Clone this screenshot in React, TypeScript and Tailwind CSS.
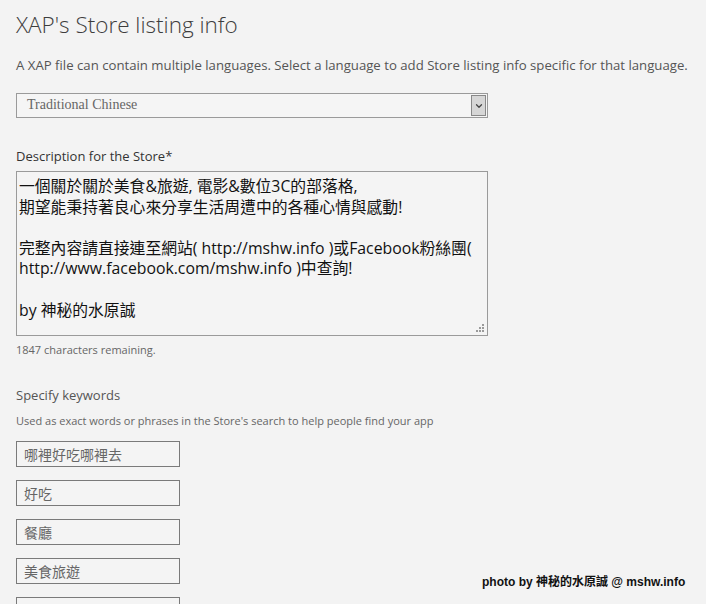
import { ChevronDown } from 'lucide-react';

const sans = { fontFamily: '"Open Sans", "Noto Sans CJK TC", sans-serif' };

const keywords = ['哪裡好吃哪裡去', '好吃', '餐廳', '美食旅遊', '台灣'];

export default function App() {
  return (
    <div className="relative h-[604px] w-[706px] overflow-hidden bg-[#f3f3f3] text-[#444]" style={sans}>
      <div className="px-4 pt-[9px]">
        {/* Heading */}
        <h1 className="text-[22.5px] font-light leading-[32px] text-[#3d3d3d]">XAP's Store listing info</h1>
        <p className="mt-[15px] text-[13.2px] leading-[18px] text-[#555]">
          A XAP file can contain multiple languages. Select a language to add Store listing info specific for that language.
        </p>

        {/* Language select */}
        <div className="mt-[19px] flex h-[25px] w-[472px] items-stretch border border-[#9a9a9a] bg-[#f5f5f5]">
          <div
            className="flex-1 pl-[10px] text-[14px] leading-[22px] text-[#666]"
            style={{ fontFamily: '"Liberation Serif", serif' }}
          >
            Traditional Chinese
          </div>
          <div className="m-px flex w-[15px] items-center justify-center border border-[#888] bg-[#d6d6d6]">
            <ChevronDown className="h-[10px] w-[10px] text-[#444]" strokeWidth={3} />
          </div>
        </div>

        {/* Description */}
        <div className="mt-[29px] text-[13px] leading-[18px] text-[#333]">Description for the Store*</div>
        <div className="relative mt-[6px] h-[165px] w-[472px] border border-[#9a9a9a] bg-[#f4f4f4] px-[2px] pt-[4px] text-[15.8px] leading-[20.6px] text-[#111]">
          <div>一個關於關於美食&amp;旅遊, 電影&amp;數位3C的部落格,</div>
          <div>期望能秉持著良心來分享生活周遭中的各種心情與感動!</div>
          <div>&nbsp;</div>
          <div>完整內容請直接連至網站( http://mshw.info )或Facebook粉絲團(</div>
          <div>http://www.facebook.com/mshw.info )中查詢!</div>
          <div>&nbsp;</div>
          <div>by 神秘的水原誠</div>
          <svg className="absolute bottom-[2px] right-[2px]" width="10" height="10" viewBox="0 0 10 10">
            <g fill="#9a9a9a">
              <rect x="7" y="1" width="2" height="2" />
              <rect x="4" y="4" width="2" height="2" />
              <rect x="7" y="4" width="2" height="2" />
              <rect x="1" y="7" width="2" height="2" />
              <rect x="4" y="7" width="2" height="2" />
              <rect x="7" y="7" width="2" height="2" />
            </g>
          </svg>
        </div>
        <div className="mt-[6px] text-[11px] leading-[16px] text-[#666]">1847 characters remaining.</div>

        {/* Keywords */}
        <div className="mt-[28px] text-[13px] leading-[18px] text-[#555]">Specify keywords</div>
        <div className="mt-[9px] text-[11px] leading-[16px] text-[#666]">
          Used as exact words or phrases in the Store's search to help people find your app
        </div>
        <div className="mt-[12px] flex flex-col gap-[13px]">
          {keywords.map((k) => (
            <div
              key={k}
              className="flex h-[26px] w-[164px] items-center border border-[#7a7a7a] bg-[#f4f4f4] pl-[7px] text-[14px] text-[#666]"
            >
              {k}
            </div>
          ))}
        </div>
      </div>

      {/* watermark */}
      <div
        className="absolute left-[482px] top-[574px] text-[12px] font-bold leading-[16px] text-[#111]"
        style={{ fontFamily: '"Liberation Sans", "Noto Sans CJK TC", sans-serif' }}
      >
        photo by 神秘的水原誠 @ mshw.info
      </div>
    </div>
  );
}
